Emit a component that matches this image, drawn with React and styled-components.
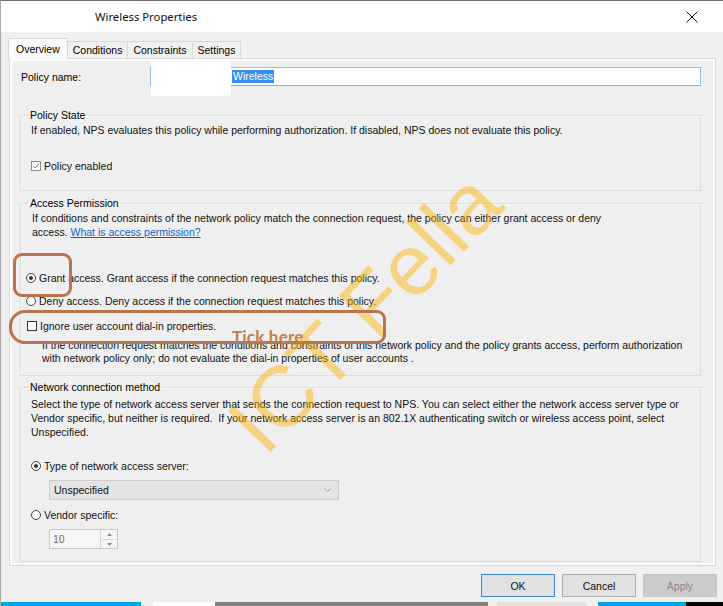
import React from 'react';
import styled, { createGlobalStyle } from 'styled-components';

const Global = createGlobalStyle`
  html, body { margin: 0; padding: 0; background: #f0f0f0; }
  body {
    width: 723px; height: 606px; overflow: hidden;
    font-family: "Liberation Sans", Arial, sans-serif;
    font-size: 10.5px; color: #000;
  }
  * { box-sizing: border-box; }
`;

const Page = styled.div`
  position: relative;
  width: 723px;
  height: 606px;
  overflow: hidden;
`;

const Frame = styled.div`
  width: 723px;
  height: 606px;
  display: flex;
  flex-direction: column;
  background: #f0f0f0;
  border-top: 1px solid #6a6a6a;
  border-left: 1px solid #a8a8a8;
`;

const TitleBar = styled.div`
  flex: none;
  height: 31px;
  background: #fff;
  display: flex;
  align-items: center;
  justify-content: space-between;
  padding: 0 25px 0 94px;
  font-family: "Noto Sans", "Liberation Sans", sans-serif;
  font-size: 11.3px;
  color: #111;
`;

const Body = styled.div`
  flex: none;
  display: flex;
  flex-direction: column;
  padding: 6px 6px 0 8px;
`;

const TabStrip = styled.div`
  display: flex;
  align-items: flex-end;
  height: 21px;
  margin: 0 0 -1px -1px;
  position: relative;
  z-index: 1;
`;

const Tab = styled.div`
  height: ${p => (p.$active ? '21px' : '18px')};
  padding: 0 ${p => (p.$active ? '7px' : '5px')};
  display: flex;
  align-items: center;
  justify-content: center;
  background: ${p => (p.$active ? '#fafafa' : '#f0f0f0')};
  border: 1px solid #d9d9d9;
  border-bottom: ${p => (p.$active ? 'none' : '1px solid #d9d9d9')};
  margin-left: -1px;
  padding-bottom: ${p => (p.$active ? '1px' : '0')};
  &:first-child { margin-left: 0; }
`;

const Panel = styled.div`
  width: 707px;
  height: 508px;
  border: 1px solid #d9d9d9;
  background: #efefef;
  box-shadow: inset 0 0 0 2px #fbfbfb;
  padding: 8px 14px 0 10px;
  display: flex;
  flex-direction: column;
`;

const NameRow = styled.div`
  display: flex;
  align-items: center;
  height: 19px;
`;

const NameLabel = styled.div`
  width: 130px;
  padding-left: 1px;
`;

const NameInput = styled.div`
  flex: 1;
  height: 19px;
  background: #fff;
  border: 1px solid #8fbfee;
  border-bottom-color: #7db2e8;
  display: flex;
  align-items: center;
  padding-left: 81px;
`;

const Selected = styled.span`
  background: #3390f0;
  color: #fff;
  line-height: 13px;
  padding: 0 1px;
`;

const Group = styled.fieldset`
  margin: ${p => p.$mt}px 0 0 0;
  padding: 0 10px ${p => p.$pb}px 10px;
  border: 1px solid #dcdcdc;
  box-shadow: inset 1px 1px 0 #f8f8f8;
  min-width: 0;
`;

const Legend = styled.legend`
  padding: 0 2px;
  margin-left: -3px;
  line-height: 13px;
`;

const Para = styled.div`
  margin-top: ${p => p.$mt || 0}px;
  margin-left: ${p => p.$ml || 0}px;
  line-height: ${p => p.$lh || 13.3}px;
  color: #111;
`;

const Link = styled.a`
  color: #0a64c8;
  text-decoration: underline;
`;

const OptionRow = styled.div`
  display: flex;
  align-items: center;
  height: 13px;
  margin-top: ${p => p.$mt || 0}px;
  margin-left: ${p => p.$ml || 0}px;
  gap: 3px;
  color: #111;
`;

const Radio = styled.span`
  width: 10px;
  height: 10px;
  border-radius: 50%;
  border: 1px solid #444;
  background: #fff;
  display: inline-flex;
  align-items: center;
  justify-content: center;
  flex: none;
  &::after {
    content: '';
    width: 4px;
    height: 4px;
    border-radius: 50%;
    background: ${p => (p.$on ? '#333' : 'transparent')};
  }
`;

const Check = styled.span`
  width: 10px;
  height: 10px;
  border: 1px solid ${p => (p.$dim ? '#8a8a8a' : '#333')};
  background: #fff;
  display: inline-flex;
  align-items: center;
  justify-content: center;
  flex: none;
`;

const Select = styled.div`
  margin: 8px 0 0 18px;
  width: 290px;
  height: 20px;
  flex: none;
  background: #e4e4e4;
  border: 1px solid #cbcbcb;
  display: flex;
  align-items: center;
  justify-content: space-between;
  padding: 0 7px 0 4px;
  color: #111;
`;

const Spin = styled.div`
  margin: 8px 0 0 18px;
  width: 69px;
  height: 20px;
  flex: none;
  border: 1px solid #c8c8c8;
  background: #f6f6f6;
  display: flex;
`;

const SpinText = styled.div`
  flex: 1;
  display: flex;
  align-items: center;
  padding-left: 3px;
  color: #6b6b6b;
`;

const SpinButtons = styled.div`
  width: 17px;
  border-left: 1px solid #d4d4d4;
  display: flex;
  flex-direction: column;
`;

const SpinBtn = styled.div`
  flex: 1;
  display: flex;
  align-items: center;
  justify-content: center;
  & + & { border-top: 1px solid #dcdcdc; }
`;

const ButtonRow = styled.div`
  display: flex;
  justify-content: flex-end;
  gap: 7px;
  margin-top: 8px;
`;

const Button = styled.div`
  width: 74px;
  height: 23px;
  display: flex;
  align-items: center;
  justify-content: center;
  background: ${p => (p.$disabled ? '#cccccc' : '#e1e1e1')};
  border: 1px solid ${p => (p.$primary ? '#3f86c6' : p.$disabled ? '#c4c4c4' : '#adadad')};
  box-shadow: ${p => (p.$primary ? 'inset 0 0 0 1px #cfe3f6' : 'none')};
  color: ${p => (p.$disabled ? '#8a8a8a' : '#111')};
`;

const Taskbar = styled.div`
  margin-top: auto;
  height: 4px;
  display: flex;
  background: #f0f0f0;
`;

const Seg = styled.div`
  width: ${p => p.$w}px;
  margin-left: ${p => p.$ml || 0}px;
  background: ${p => p.$c};
  flex: none;
`;

const Redact = styled.div`
  position: absolute;
  left: 151px;
  top: 57px;
  width: 80px;
  height: 39px;
  background: #fff;
`;

const Ring = styled.div`
  position: absolute;
  left: ${p => p.$x}px;
  top: ${p => p.$y}px;
  width: ${p => p.$w}px;
  height: ${p => p.$h}px;
  border: 3px solid #b8744c;
  border-radius: ${p => p.$r};
  pointer-events: none;
`;

const TickHere = styled.div`
  position: absolute;
  left: 232px;
  top: 326px;
  font-family: Lato, "Open Sans", sans-serif;
  font-weight: 700;
  font-size: 17px;
  color: #c4804f;
  letter-spacing: 0.2px;
`;

const Watermark = styled.div`
  position: absolute;
  left: 364px;
  top: 312px;
  transform: translate(-50%, -50%) rotate(-46deg);
  font-family: "Liberation Sans", Arial, sans-serif;
  font-size: 86px;
  color: rgba(255, 178, 0, 0.45);
  white-space: nowrap;
  pointer-events: none;
  line-height: 1;
`;

const CheckMark = () => (
  <svg width="8" height="8" viewBox="0 0 8 8">
    <path d="M1 4.2 L3 6.2 L7 1.6" fill="none" stroke="#777" strokeWidth="1" />
  </svg>
);

export default function App() {
  return (
    <Page>
      <Global />
      <Frame>
        <TitleBar>
          <span>Wireless Properties</span>
          <svg width="12" height="12" viewBox="0 0 12 12">
            <path d="M0.5 0.5 L11.5 11.5 M11.5 0.5 L0.5 11.5" stroke="#111" strokeWidth="1" />
          </svg>
        </TitleBar>
        <Body>
          <TabStrip>
            <Tab $active>Overview</Tab>
            <Tab>Conditions</Tab>
            <Tab>Constraints</Tab>
            <Tab>Settings</Tab>
          </TabStrip>
          <Panel>
            <NameRow>
              <NameLabel>Policy name:</NameLabel>
              <NameInput>
                <Selected>Wireless</Selected>
              </NameInput>
            </NameRow>

            <Group $mt={23} $pb={18}>
              <Legend>Policy State</Legend>
              <Para $mt={2}>
                If enabled, NPS evaluates this policy while performing authorization. If disabled, NPS does not evaluate this policy.
              </Para>
              <OptionRow $mt={22}>
                <Check $dim>
                  <CheckMark />
                </Check>
                Policy enabled
              </OptionRow>
            </Group>

            <Group $mt={6} $pb={10}>
              <Legend>Access Permission</Legend>
              <Para $mt={2} $ml={1}>
                If conditions and constraints of the network policy match the connection request, the policy can either grant access or deny
                <br />
                access. <Link>What is access permission?</Link>
              </Para>
              <OptionRow $mt={33} $ml={-5}>
                <Radio $on />
                Grant access. Grant access if the connection request matches this policy.
              </OptionRow>
              <OptionRow $mt={10} $ml={-5}>
                <Radio />
                Deny access. Deny access if the connection request matches this policy.
              </OptionRow>
              <OptionRow $mt={12} $ml={-4}>
                <Check />
                Ignore user account dial-in properties.
              </OptionRow>
              <Para $mt={6} $ml={11}>
                If the connection request matches the conditions and constraints of this network policy and the policy grants access, perform authorization
                <br />
                with network policy only; do not evaluate the dial-in properties of user accounts .
              </Para>
            </Group>

            <Group $mt={5} $pb={12}>
              <Legend>Network connection method</Legend>
              <Para $mt={4} $lh={13.6}>
                Select the type of network access server that sends the connection request to NPS. You can select either the network access server type or
                <br />
                Vendor specific, but neither is required.&nbsp; If your network access server is an 802.1X authenticating switch or wireless access point, select
                <br />
                Unspecified.
              </Para>
              <OptionRow $mt={20}>
                <Radio $on />
                Type of network access server:
              </OptionRow>
              <Select>
                <span>Unspecified</span>
                <svg width="7" height="4" viewBox="0 0 7 4">
                  <path d="M0.5 0.5 L3.5 3.5 L6.5 0.5" fill="none" stroke="#9a9a9a" strokeWidth="1" />
                </svg>
              </Select>
              <OptionRow $mt={8}>
                <Radio />
                Vendor specific:
              </OptionRow>
              <Spin>
                <SpinText>10</SpinText>
                <SpinButtons>
                  <SpinBtn>
                    <svg width="5" height="3" viewBox="0 0 5 3">
                      <path d="M0 3 L2.5 0 L5 3 Z" fill="#8a8a8a" />
                    </svg>
                  </SpinBtn>
                  <SpinBtn>
                    <svg width="5" height="3" viewBox="0 0 5 3">
                      <path d="M0 0 L2.5 3 L5 0 Z" fill="#8a8a8a" />
                    </svg>
                  </SpinBtn>
                </SpinButtons>
              </Spin>
            </Group>
          </Panel>
          <ButtonRow>
            <Button $primary>OK</Button>
            <Button>Cancel</Button>
            <Button $disabled>Apply</Button>
          </ButtonRow>
        </Body>
        <Taskbar>
          <Seg $w={140} $c="#00a2ed" />
          <Seg $w={62} $ml={12} $c="#ffffff" />
          <Seg $w={273} $c="#828282" />
          <Seg $w={89} $ml={9} $c="#e2e2e2" />
          <Seg $w={88} $ml={12} $c="#00a2ed" />
          <Seg $w={38} $c="#000000" />
        </Taskbar>
      </Frame>
      <Redact />
      <Watermark>ICT Fella</Watermark>
      <Ring $x={13} $y={253} $w={59} $h={44} $r="9px" />
      <Ring $x={9} $y={310} $w={377} $h={34} $r="16px 9px 9px 16px" />
      <TickHere>Tick here</TickHere>
    </Page>
  );
}
